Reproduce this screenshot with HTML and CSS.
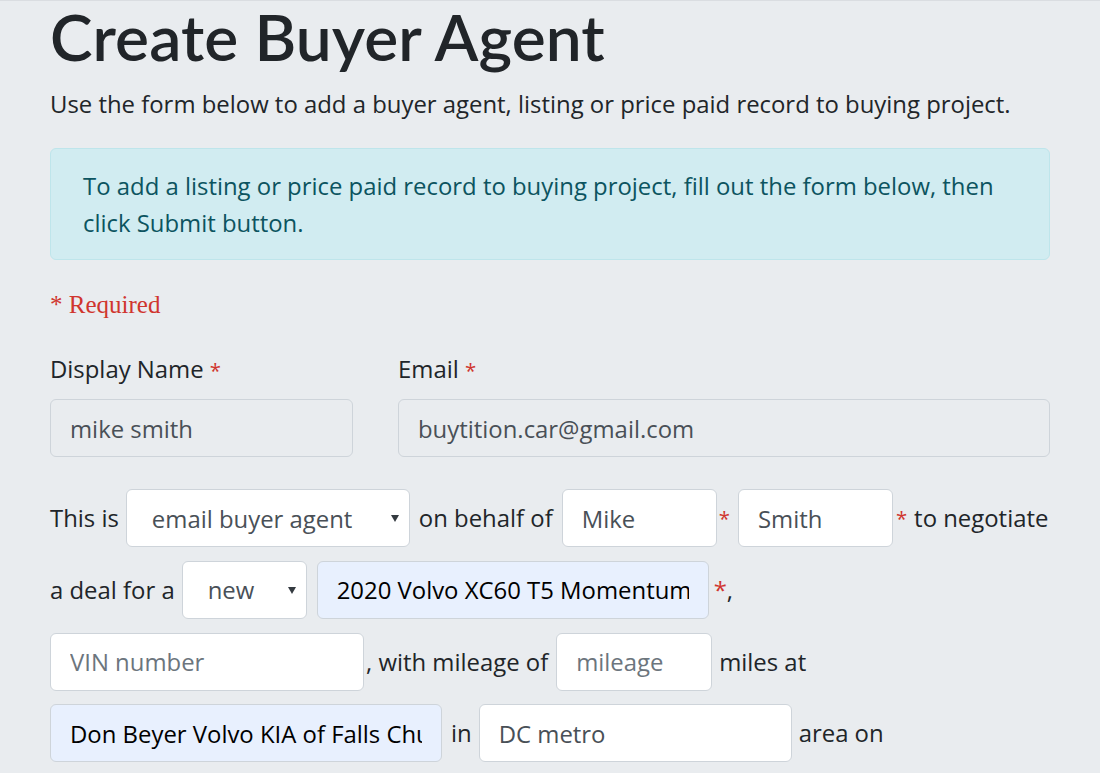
FILE: index.html
```html
<!DOCTYPE html>
<html lang="en">
<head>
<meta charset="utf-8">
<title>Create Buyer Agent</title>
<link rel="stylesheet" href="styles.css">
</head>
<body>
<div class="page">
  <h1 class="title">Create Buyer Agent</h1>
  <p class="lead">Use the form below to add a buyer agent, listing or price paid record to buying project.</p>
  <div class="alert">To add a listing or price paid record to buying project, fill out the form below, then click Submit button.</div>
  <p class="required">* Required</p>
  <div class="field-row">
    <div class="field field-name">
      <label class="label">Display Name <span class="star">*</span></label>
      <input class="control control-readonly" type="text" value="mike smith" readonly>
    </div>
    <div class="field field-email">
      <label class="label">Email <span class="star">*</span></label>
      <input class="control control-readonly" type="text" value="buytition.car@gmail.com" readonly>
    </div>
  </div>
  <div class="sentence">
    <div class="line">
      <span class="word word-lead">This is</span>
      <span class="select-wrap w-role"><select class="control select"><option>email buyer agent</option></select></span>
      <span class="word">on behalf of</span>
      <input class="control w-first" type="text" value="Mike">
      <span class="star star-gap">*</span>
      <input class="control w-last" type="text" value="Smith">
      <span class="star star-tight">*</span>
      <span class="word">to negotiate</span>
    </div>
    <div class="line">
      <span class="word word-lead">a deal for a</span>
      <span class="select-wrap w-cond"><select class="control select"><option>new</option></select></span>
      <input class="control control-filled w-vehicle" type="text" value="2020 Volvo XC60 T5 Momentum">
      <span class="word word-tight"><span class="star">*</span>,</span>
    </div>
    <div class="line">
      <input class="control w-vin" type="text" placeholder="VIN number">
      <span class="word word-comma">, with mileage of</span>
      <input class="control w-mileage" type="text" placeholder="mileage">
      <span class="word word-near">miles at</span>
    </div>
    <div class="line">
      <input class="control control-filled w-dealer" type="text" value="Don Beyer Volvo KIA of Falls Church">
      <span class="word word-in">in</span>
      <input class="control w-metro" type="text" value="DC metro">
      <span class="word word-near">area on</span>
    </div>
    <div class="line">
      <input class="control w-date" type="text">
      <span class="word">and</span>
      <input class="control w-extra" type="text">
    </div>
  </div>
</div>
</body>
</html>
```

FILE: styles.css
```css
html {
  background: #ffffff;
}

body {
  margin: 0 1px 0 0;
  min-height: 772px;
  background: #e9ecef;
  border-top: 1px solid #dadde1;
  font-family: "Open Sans", "Noto Sans", sans-serif;
  font-size: 23.9px;
  color: #212529;
}

.page {
  width: 1000px;
  margin-left: 50px;
}

.title {
  margin: 0;
  font-family: "Lato", "Open Sans", sans-serif;
  font-size: 64px;
  line-height: 72px;
  font-weight: 600;
  letter-spacing: 0.1px;
}

.lead {
  margin: 13px 0 0;
  line-height: 36px;
}

.alert {
  margin-top: 26px;
  padding: 18px 32px;
  line-height: 37px;
  background: #d1ecf1;
  border: 1px solid #bee5eb;
  border-radius: 6px;
  color: #0c5460;
}

.required {
  margin: 27px 0 0;
  font-family: "Liberation Serif", "DejaVu Serif", serif;
  font-size: 25px;
  line-height: 36px;
  color: #d0352e;
}

.star {
  color: #d0352e;
  font-size: 0.85em;
  line-height: 1;
}

.field-row {
  display: flex;
  gap: 45px;
  margin-top: 28px;
}

.field {
  display: flex;
  flex-direction: column;
}

.field-name {
  width: 303px;
}

.field-email {
  width: 652px;
}

.label {
  height: 36px;
  line-height: 36px;
  margin-bottom: 12px;
}

.control {
  box-sizing: border-box;
  height: 58px;
  padding: 0 19px;
  font-family: inherit;
  font-size: 23.9px;
  color: #495057;
  background: #ffffff;
  border: 1px solid #ced4da;
  border-radius: 6px;
  outline: none;
}

.control::placeholder {
  color: #6c757d;
}

.control-readonly {
  width: 100%;
  background: #e9ecef;
}

.control-filled {
  background: #e8f0fe;
  color: #000000;
}

.sentence {
  margin-top: 32px;
}

.line {
  display: flex;
  align-items: center;
  gap: 9px;
  margin-bottom: 13.75px;
}

.line > * {
  flex-shrink: 0;
}

.word {
  white-space: nowrap;
  line-height: 36px;
}

.word .star {
  font-size: 1em;
}

.word-lead {
  margin-right: -2px;
}

.word-tight {
  margin-left: -4px;
}

.word-comma {
  margin-left: -7px;
  margin-right: -1px;
}

.word-near {
  margin-left: -2px;
}

.word-in {
  margin-right: -2px;
}

.star-gap {
  margin-left: -7px;
  margin-right: -1px;
}

.star-tight {
  margin-left: -6px;
  margin-right: -2px;
}

.select-wrap {
  position: relative;
  display: block;
}

.select-wrap::after {
  content: "";
  position: absolute;
  right: 11px;
  top: 26px;
  border-left: 4px solid transparent;
  border-right: 4px solid transparent;
  border-top: 7px solid #343a40;
  pointer-events: none;
}

.select {
  width: 100%;
  padding-left: 25px;
  padding-right: 30px;
  -webkit-appearance: none;
  appearance: none;
  background: #ffffff;
}

.w-role { width: 284px; }
.w-cond { width: 125px; margin-right: 1px; }
.w-first { width: 155px; }
.w-last { width: 155px; }
.w-vehicle { width: 392px; }
.w-vin { width: 314px; }
.w-mileage { width: 156px; }
.w-dealer { width: 392px; }
.w-metro { width: 313px; }
.w-date { width: 277px; }
.w-extra { width: 362px; }
```
